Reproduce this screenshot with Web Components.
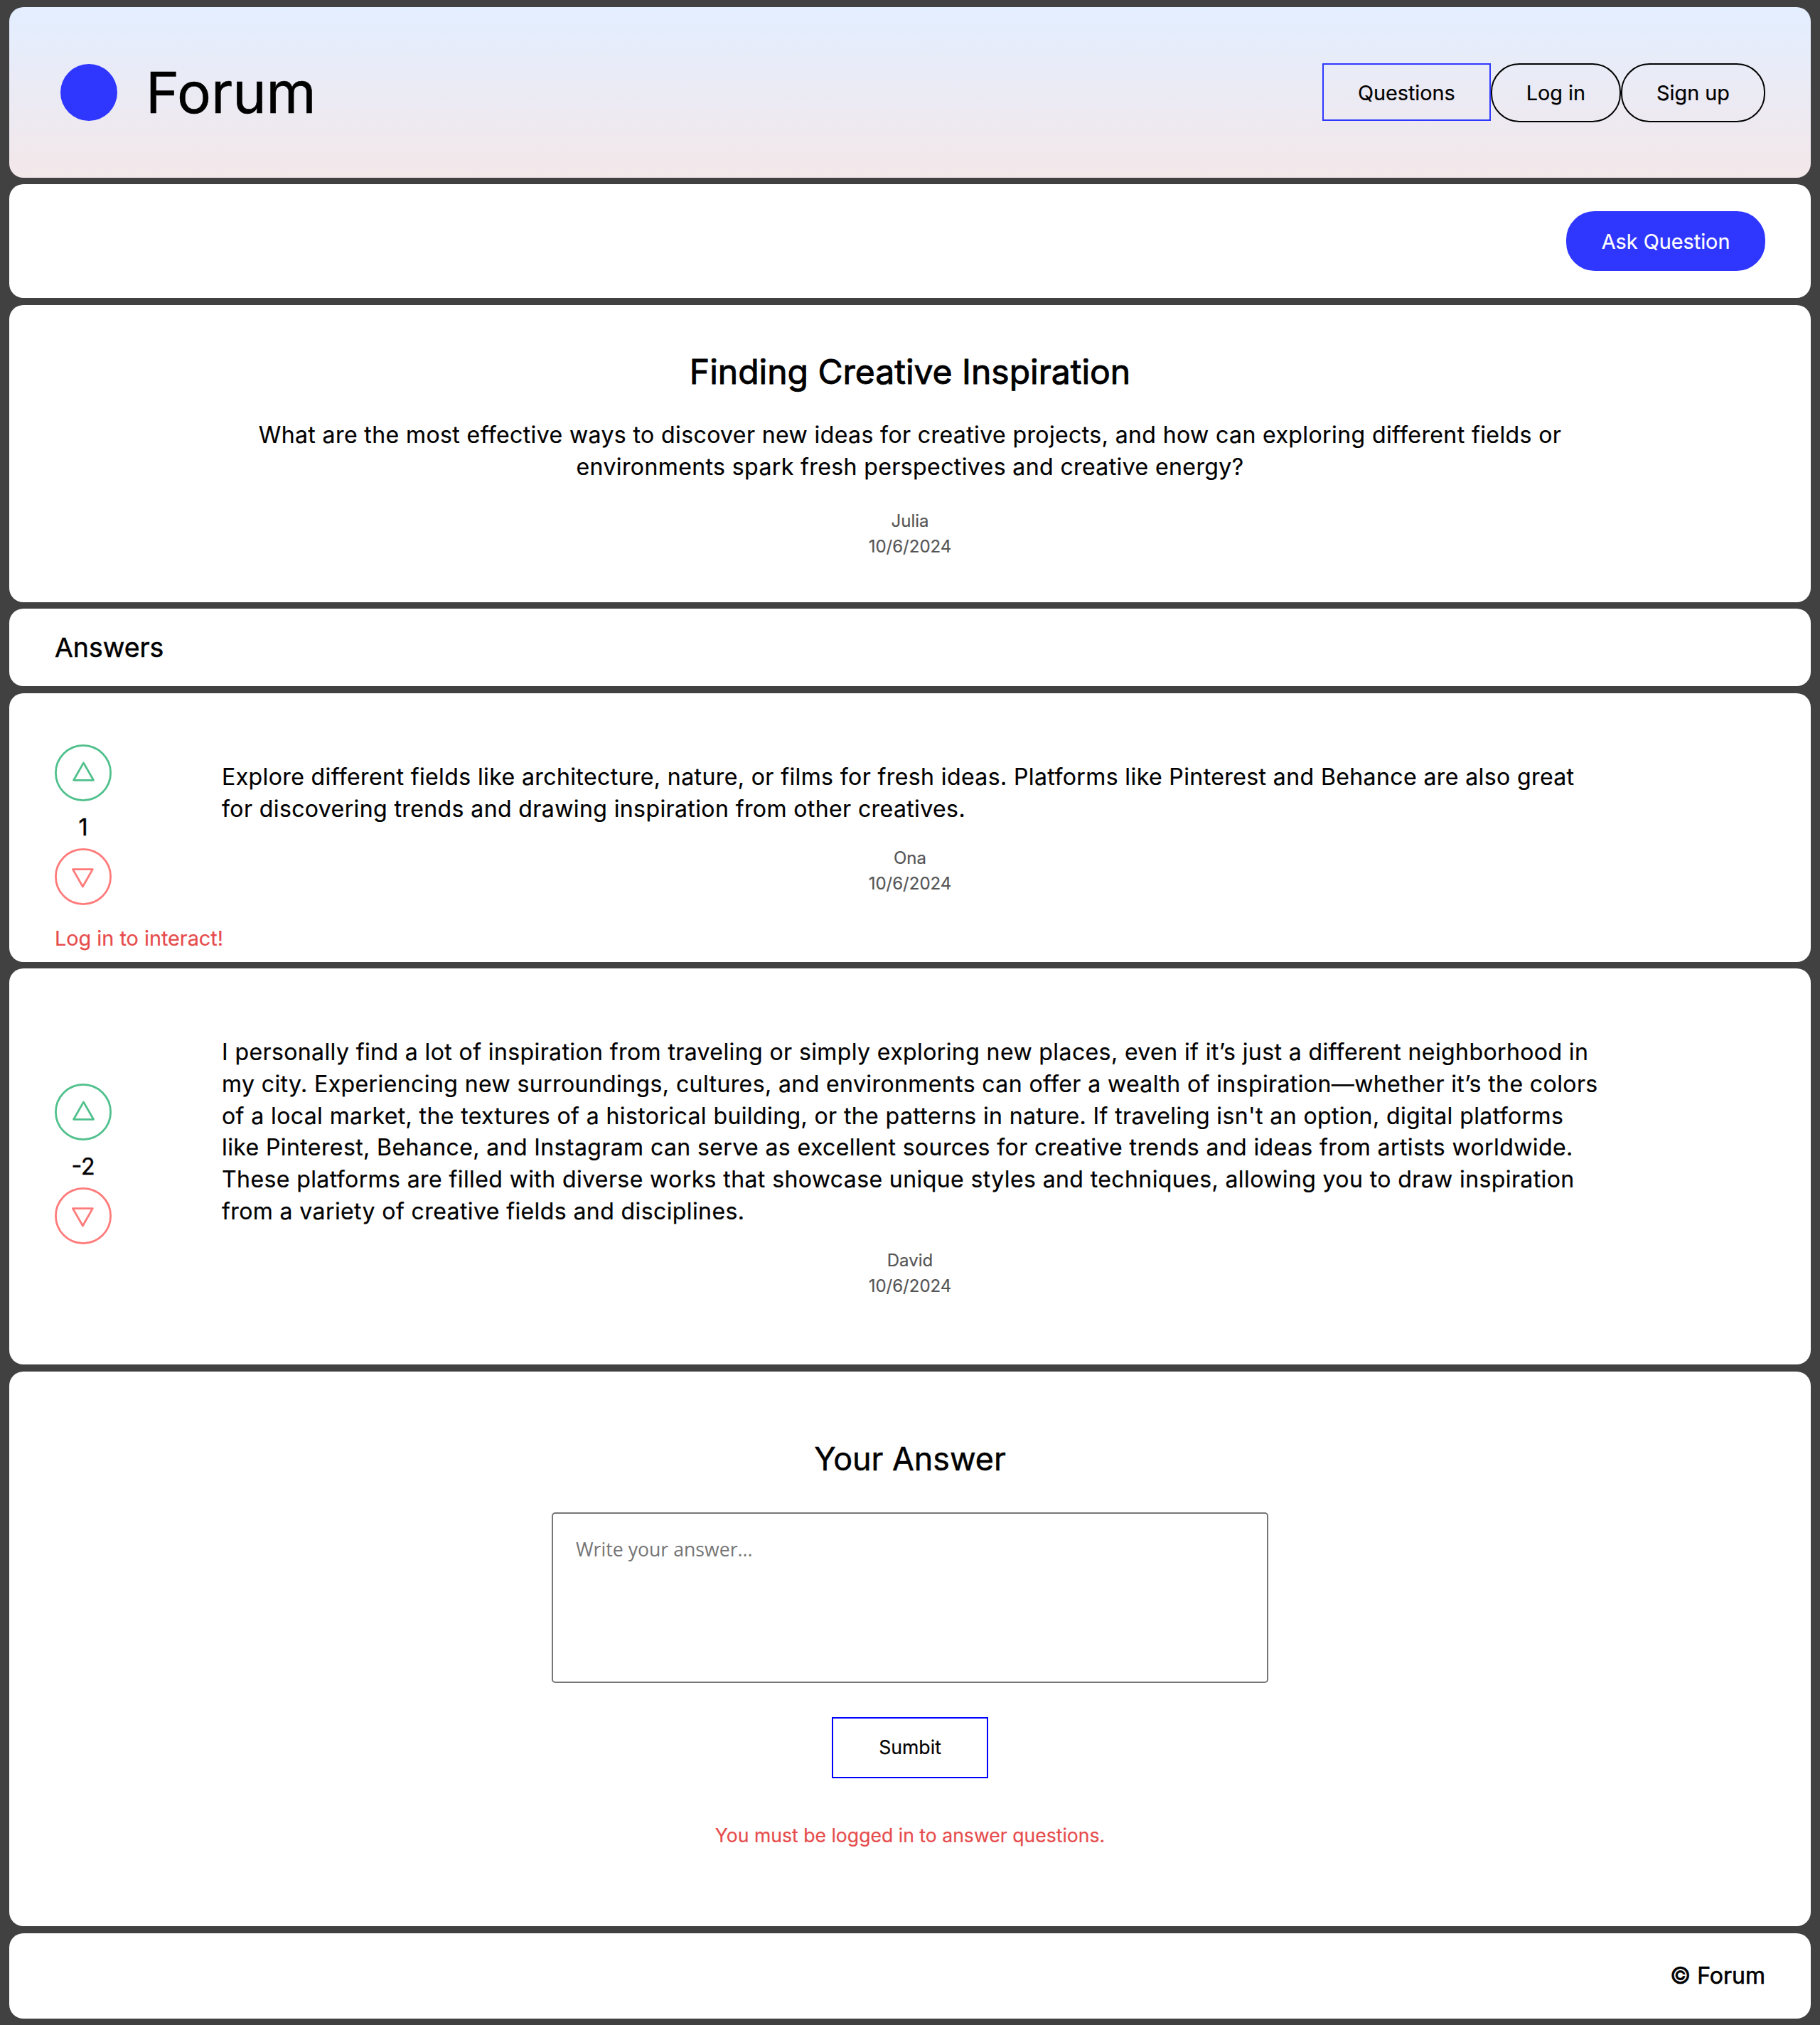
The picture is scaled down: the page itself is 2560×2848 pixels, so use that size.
<!DOCTYPE html>
<html lang="en">
<head>
<meta charset="utf-8">
<title>Forum</title>
<style>
  html { background: #414141; }
  body { margin: 0; font-family: Inter, "Liberation Sans", sans-serif; font-size: 32px; line-height: 1.4; color: #000; -webkit-text-stroke: .2px currentColor; }
</style>
</head>
<body>
<forum-page>
  <forum-header>
    <forum-button variant="square">Questions</forum-button>
    <forum-button>Log in</forum-button>
    <forum-button>Sign up</forum-button>
  </forum-header>
  <forum-card class="toolbar"><forum-button variant="primary">Ask Question</forum-button></forum-card>
  <question-card>
    <span slot="title">Finding Creative Inspiration</span>
    What are the most effective ways to discover new ideas for creative projects, and how can exploring different fields or environments spark fresh perspectives and creative energy?
    <post-meta slot="meta" author="Julia" date="10/6/2024"></post-meta>
  </question-card>
  <forum-card class="heading"><h3>Answers</h3></forum-card>
  <answer-card class="short">
    <vote-box slot="votes" count="1">Log in to interact!</vote-box>
    Explore different fields like architecture, nature, or films for fresh ideas. Platforms like Pinterest and Behance are also great for discovering trends and drawing inspiration from other creatives.
    <post-meta slot="meta" author="Ona" date="10/6/2024"></post-meta>
  </answer-card>
  <answer-card class="long">
    <vote-box slot="votes" count="-2"></vote-box>
    I personally find a lot of inspiration from traveling or simply exploring new places, even if it’s just a different neighborhood in my city. Experiencing new surroundings, cultures, and environments can offer a wealth of inspiration—whether it’s the colors of a local market, the textures of a historical building, or the patterns in nature. If traveling isn't an option, digital platforms like Pinterest, Behance, and Instagram can serve as excellent sources for creative trends and ideas from artists worldwide. These platforms are filled with diverse works that showcase unique styles and techniques, allowing you to draw inspiration from a variety of creative fields and disciplines.
    <post-meta slot="meta" author="David" date="10/6/2024"></post-meta>
  </answer-card>
  <answer-form></answer-form>
  <forum-card class="footer">© Forum</forum-card>
</forum-page>
<script>
const BASE = `*{box-sizing:border-box} :host{box-sizing:border-box;display:block} h1,h2,h3,p{margin:0;font-weight:400}`;
const CARD = `:host{background:#fff;border-radius:20px}`;
function define(name, html, setup) {
  const tpl = document.createElement('template');
  tpl.innerHTML = html;
  customElements.define(name, class extends HTMLElement {
    constructor() {
      super();
      this.attachShadow({ mode: 'open' }).append(tpl.content.cloneNode(true));
    }
    connectedCallback() { if (setup) setup(this, this.shadowRoot); }
  });
}

define('forum-page', `<style>${BASE}
  :host{display:flex;flex-direction:column;padding:10px 13px 9px}
  ::slotted(forum-header){height:240px;margin-bottom:9px}
  ::slotted(.toolbar){height:160px;margin-bottom:10px;justify-content:flex-end}
  ::slotted(question-card){height:418px;margin-bottom:9px}
  ::slotted(.heading){height:109px;margin-bottom:10px;padding-top:2px}
  ::slotted(.short){height:378px;margin-bottom:9px}
  ::slotted(.long){height:557px;margin-bottom:10px}
  ::slotted(answer-form){height:780px;margin-bottom:10px}
  ::slotted(.footer){height:120px;justify-content:flex-end;-webkit-text-stroke-width:.6px}
</style><slot></slot>`);

define('forum-card', `<style>${BASE}${CARD}
  :host{display:flex;align-items:center;padding:0 64px}
  ::slotted(h3){margin:0;font-size:37.44px;font-weight:400;-webkit-text-stroke:.5px #000}
</style><slot></slot>`);

define('forum-header', `<style>${BASE}
  :host{display:flex;align-items:center;justify-content:space-between;padding:0 64px 0 72px;border-radius:20px;
    background:linear-gradient(to top,#f3e7e9 0%,#e3eeff 99%,#e3eeff 100%)}
  .brand{display:flex;align-items:center;gap:40px}
  .logo{width:80px;height:80px;border-radius:50%;background:#2f37ff}
  h1{font-size:80px;line-height:112px;-webkit-text-stroke:.6px #000}
  nav{display:flex;align-items:flex-start;height:82px}
</style><div class="brand"><div class="logo"></div><h1>Forum</h1></div><nav><slot></slot></nav>`);

define('forum-button', `<style>${BASE}
  :host{flex:none}
  button{display:block;font:400 28.8px/40px Inter,"Liberation Sans",sans-serif;color:#000;background:none;
    border:2px solid #000;border-radius:40px;padding:20px 48px 19px;margin:0;white-space:nowrap}
  :host([variant=square]) button{border-color:#2f37ff;border-radius:0;padding:20px 48px 17px}
  :host([variant=primary]) button{border-color:#2f37ff;background:#2f37ff;color:#fff;padding:21px 47.6px 19px}
</style><button><slot></slot></button>`);

define('post-meta', `<style>${BASE}
  :host{font-size:24px;line-height:35.8px;color:#555;text-align:center;letter-spacing:0}
</style><p class="a"></p><p class="d"></p>`, (el, r) => {
  r.querySelector('.a').textContent = el.getAttribute('author');
  r.querySelector('.d').textContent = el.getAttribute('date');
});

define('question-card', `<style>${BASE}${CARD}
  :host{display:flex;flex-direction:column;align-items:center;padding-top:60px}
  h2{font-size:48px;line-height:67px;-webkit-text-stroke:.9px #000}
  p{width:1936px;margin:34px 0 35.4px;text-align:center;letter-spacing:.4px}
</style><h2><slot name="title"></slot></h2><p><slot></slot></p><slot name="meta"></slot>`);

define('answer-card', `<style>${BASE}${CARD}
  :host{display:flex;align-items:flex-start;gap:155px;padding-left:64px}
  .votes{width:80px;padding-top:72px}
  :host(.long) .votes{padding-top:162px}
  .body{width:1936px;padding-top:96px}
  p{margin-bottom:28.4px;letter-spacing:.4px}
</style><div class="votes"><slot name="votes"></slot></div><div class="body"><p><slot></slot></p><slot name="meta"></slot></div>`);

define('vote-box', `<style>${BASE}
  :host{display:flex;flex-direction:column;align-items:center}
  svg{display:block;width:80px;height:80px;fill:none;stroke-width:2.8;stroke-linejoin:round}
  .up{stroke:#50c08c}
  .down{stroke:#ff7b7b}
  .n{margin:15px 0 6.2px;-webkit-text-stroke:.5px #000}
  .warn{align-self:flex-start;margin-top:26.6px;font-size:28.8px;color:#e64c4c;white-space:nowrap;-webkit-text-stroke-color:#e64c4c}
</style>
<svg class="up" viewBox="0 0 80 80"><circle cx="40" cy="40" r="38.6"/><path d="M40.5 25.9 54.5 50.3H26.6Z"/></svg>
<div class="n"></div>
<svg class="down" viewBox="0 0 80 80"><circle cx="40" cy="40" r="38.6"/><path d="M39.4 54 25.4 29.6H53.3Z"/></svg>
<div class="warn"><slot></slot></div>`, (el, r) => { r.querySelector('.n').textContent = el.getAttribute('count'); });

define('answer-form', `<style>${BASE}${CARD}
  :host{display:flex;flex-direction:column;align-items:center;padding-top:92px}
  h2{font-size:44.8px;line-height:62px;-webkit-text-stroke:.5px #000}
  textarea{display:block;width:1008px;height:240px;margin:44px 0 48px;padding:32px;border:2px solid #767676;border-radius:5px;
    resize:none;background:#fff;font:400 26.667px "Open Sans","Noto Sans",sans-serif;-webkit-text-stroke:0}
  textarea::placeholder{color:#757575}
  button{height:86px;padding:0 64px 2px;border:2px solid #00f;border-radius:0;background:none;color:#000;
    font:400 26.667px Inter,"Liberation Sans",sans-serif}
  p{margin-top:62px;font-size:26.6px;color:#e64c4c;-webkit-text-stroke-color:#e64c4c}
</style>
<h2>Your Answer</h2>
<textarea placeholder="Write your answer..."></textarea>
<button>Sumbit</button>
<p>You must be logged in to answer questions.</p>`);
</script>
</body>
</html>
